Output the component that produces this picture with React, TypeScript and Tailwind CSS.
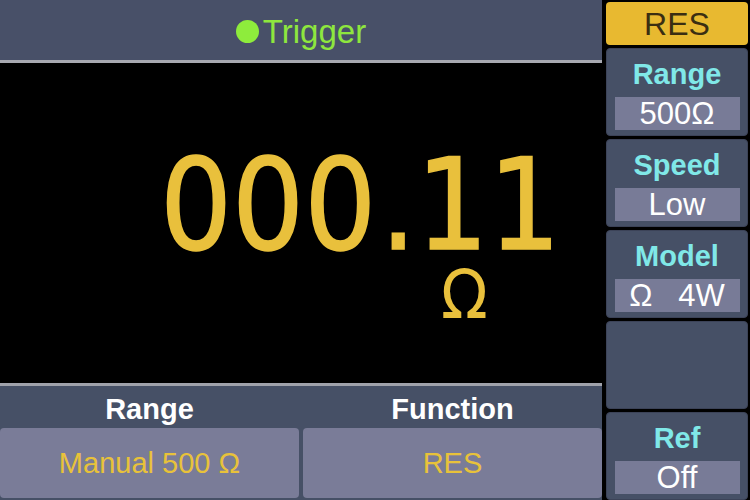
import React from "react";

const sans = { fontFamily: '"Liberation Sans", Arial, sans-serif' };
const digits = { fontFamily: '"DejaVu Sans Condensed", "DejaVu Sans", sans-serif' };

interface SideItem {
  label: string;
  value: string;
}

const sideItems: (SideItem | null)[] = [
  { label: "Range", value: "500Ω" },
  { label: "Speed", value: "Low" },
  { label: "Model", value: "Ω\u00a0\u00a0\u00a04W" },
  null,
  { label: "Ref", value: "Off" },
];

function SidePanel({ item }: { item: SideItem | null }) {
  return (
    <div className="h-[88px] shrink-0 rounded-[4px] bg-[#465066] border border-[#3c4358] flex flex-col items-center">
      {item && (
        <>
          <div className="h-[48px] pt-[2px] flex items-center text-[29px] font-bold leading-none text-[#80e8e8]">
            {item.label}
          </div>
          <div className="w-[125px] h-[33px] bg-[#787b97] flex items-center justify-center text-[31px] leading-none text-white whitespace-pre">
            {item.value}
          </div>
        </>
      )}
    </div>
  );
}

function BottomCell({ label, value }: { label: string; value: string }) {
  return (
    <div className="flex flex-col">
      <div className="h-[42px] pt-[4px] bg-[#465066] flex items-center justify-center text-[29px] font-bold leading-none text-white">
        {label}
      </div>
      <div className="h-[70px] rounded-[4px] bg-[#7a7c98] flex items-center justify-center text-[29px] leading-none text-[#e8c23a]">
        {value}
      </div>
    </div>
  );
}

export default function App() {
  return (
    <div className="w-[750px] h-[500px] bg-black flex overflow-hidden" style={sans}>
      <div className="w-[602px] flex flex-col">
        <div className="h-[63px] shrink-0 pt-[2px] bg-[#485068] border-b-[3px] border-[#a8a9b1] flex items-center justify-center gap-[4px]">
          <span className="w-[23px] h-[23px] rounded-full bg-[#8eec3c]" />
          <span className="text-[33px] leading-none text-[#8ee63e]">Trigger</span>
        </div>

        <div className="h-[320px] shrink-0 bg-black pt-[88px]">
          <div
            className="ml-[160px] text-[126px] leading-[110px] text-[#e9c03c] [-webkit-text-stroke:1.5px_#e9c03c]"
            style={digits}
          >
            000<span className="ml-[4px]">.</span>11
          </div>
          <div className="ml-[441px] mt-[4px] text-[68px] leading-[60px] text-[#e9c03c]" style={digits}>
            Ω
          </div>
        </div>

        <div className="flex-1 border-t-[3px] border-[#a0a2ab] bg-[#465066] grid grid-cols-2 gap-x-[4px] content-start">
          <BottomCell label="Range" value="Manual 500 Ω" />
          <BottomCell label="Function" value="RES" />
        </div>
      </div>

      <div className="ml-[4px] w-[142px] flex flex-col gap-[3px] pt-[2px]">
        <div className="h-[43px] shrink-0 rounded-[4px] bg-[#e8b930] flex items-center justify-center text-[32px] leading-none text-[#3a2e12]">
          RES
        </div>
        {sideItems.map((item, i) => (
          <SidePanel key={i} item={item} />
        ))}
      </div>
    </div>
  );
}
